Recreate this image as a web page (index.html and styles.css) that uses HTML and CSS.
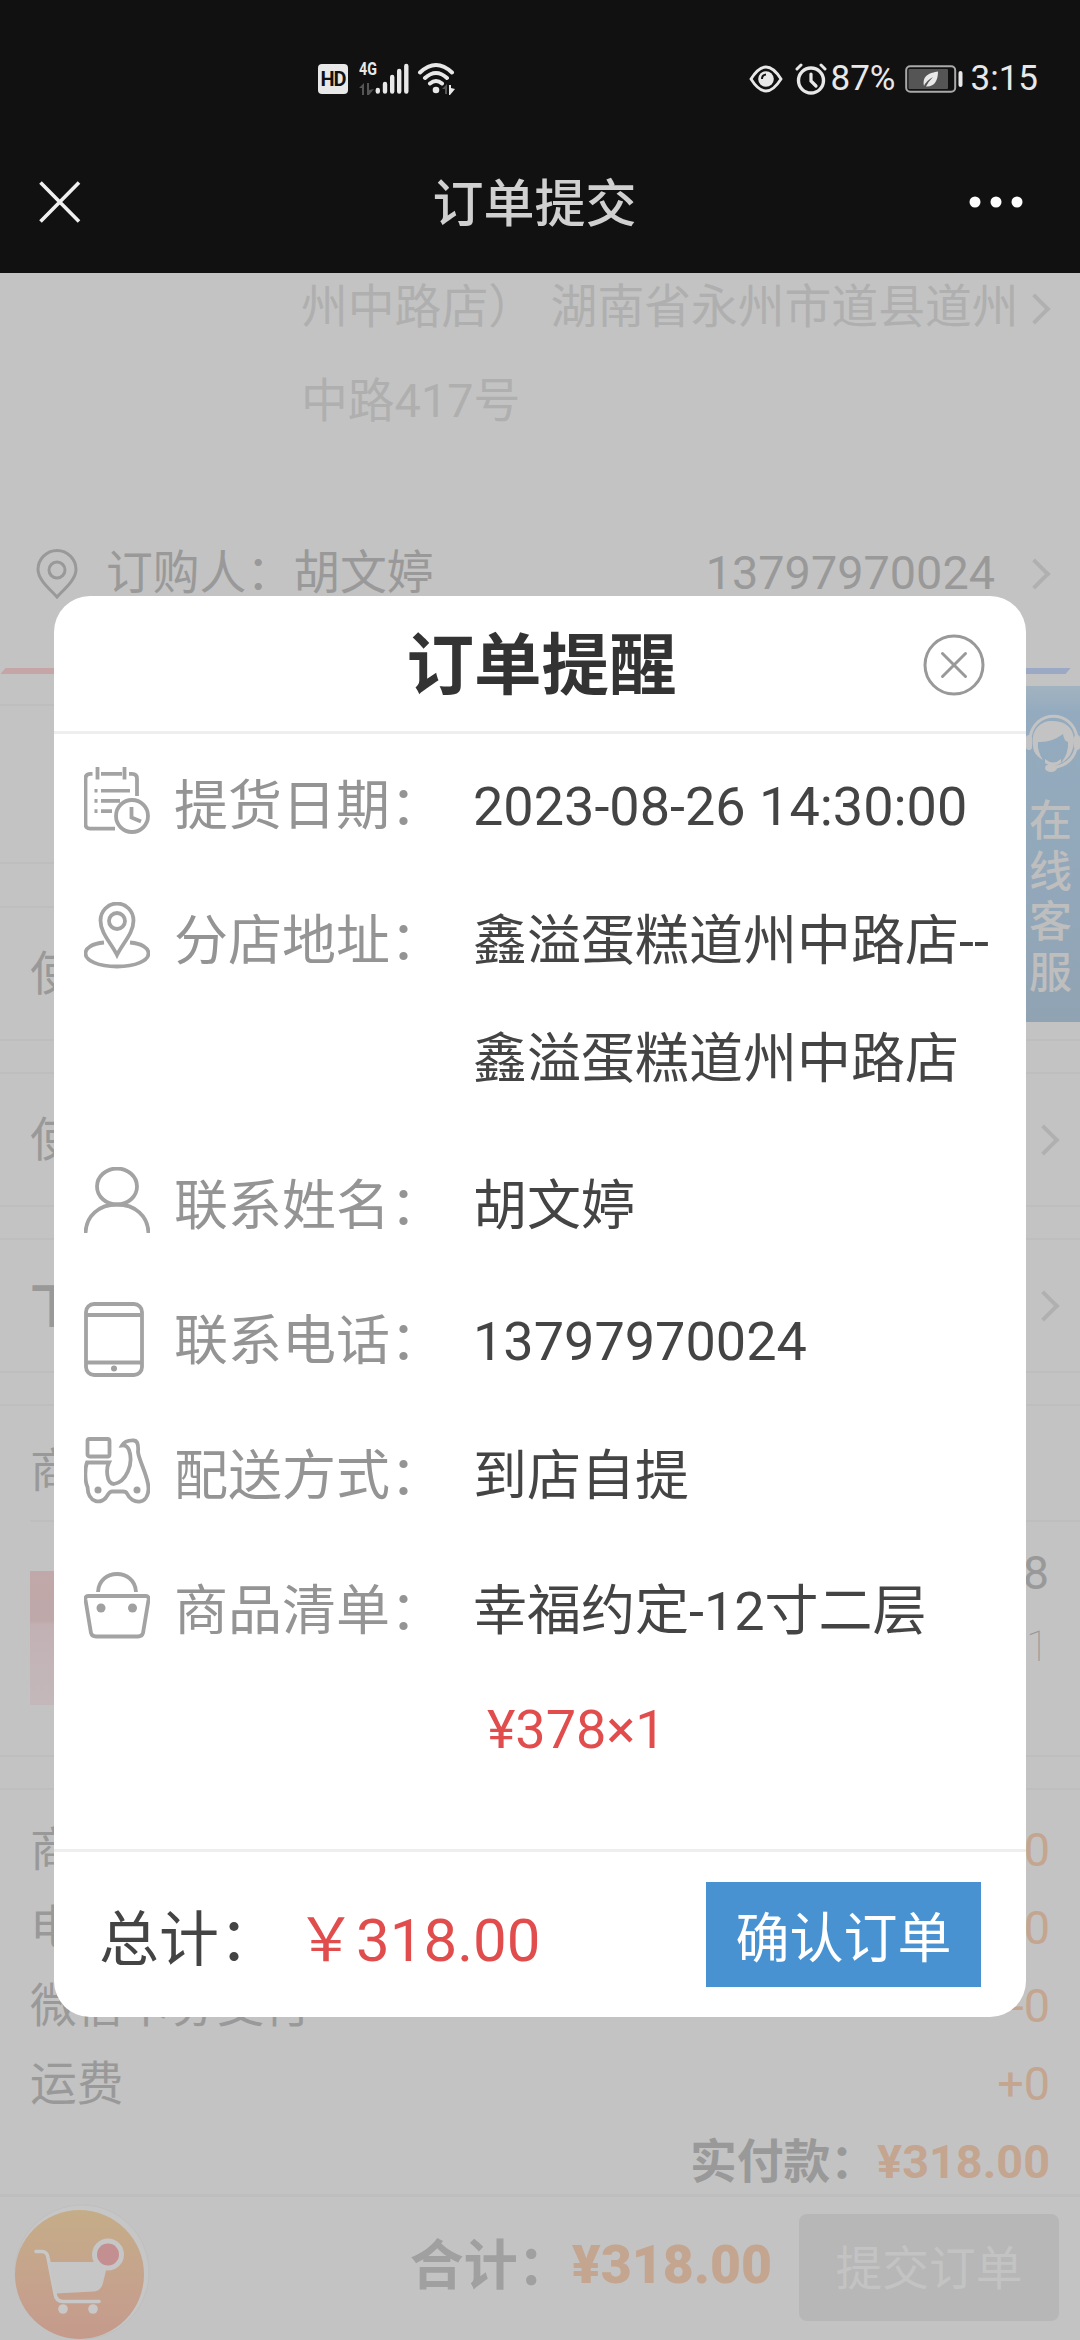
FILE: index.html
```html
<!DOCTYPE html>
<html lang="zh-CN">
<head>
    <meta charset="UTF-8">
    <meta name="viewport" content="width=device-width, initial-scale=1.0">
    <title>订单提交</title>
    <link rel="stylesheet" href="styles.css">
</head>
<body>
    <header class="topbar">
        <div class="status">
            <div class="status-left">
                <span class="hd">HD</span>
                <div class="signal">
                    <span class="net">4G</span>
                    <svg class="signal-bars" width="52" height="34" viewBox="0 0 52 34">
                        <path d="M0 26l5-5v12H3v-7zM8 21h2v7l5-1-5 6H8z" fill="#555"/>
                        <g stroke="#e8e8e8" stroke-width="4.4" stroke-linecap="round">
                            <path d="M18.8 28v1.500M26 22v7.500M33.200 15v14.500M40.200 9v20.500M47.300 4v25.500"/>
                        </g>
                    </svg>
                </div>
                <svg class="wifi" width="40" height="34" viewBox="0 0 40 34">
                    <g fill="none" stroke="#e8e8e8" stroke-width="4" stroke-linecap="round">
                        <path d="M3 10.500Q19 -4.500 35 10.500M8 16Q19 6 30 16M13 21.500Q19 16.500 25 21.500"/>
                    </g>
                    <circle cx="19" cy="28" r="3.300" fill="#e8e8e8"/>
                    <path d="M25 27l5-5v10h-2v-5z" fill="#555"/>
                    <path d="M32 23h2v3l4 1-5 6h-1z" fill="#e8e8e8"/>
                </svg>
            </div>
            <div class="status-right">
                <svg class="eye" width="34" height="28" viewBox="0 0 34 28">
                    <path d="M2 14Q17-10 32 14Q17 38 2 14Z" fill="none" stroke="#e8e8e8" stroke-width="2.800"/>
                    <circle cx="17" cy="14" r="7.800" fill="#e8e8e8"/>
                    <path d="M13 14q0-4 4-4.500" fill="none" stroke="#111" stroke-width="2"/>
                </svg>
                <svg class="alarm" width="32" height="32" viewBox="0 0 32 32">
                    <g fill="none" stroke="#e8e8e8" stroke-linecap="round">
                        <circle cx="16" cy="17.500" r="12.500" stroke-width="3.400"/>
                        <path d="M16 11v7l5 5" stroke-width="3.200"/>
                        <path d="M2 6l4-4M30 6l-4-4" stroke-width="3"/>
                    </g>
                </svg>
                <span class="percent">87%</span>
                <svg class="battery" width="60" height="28" viewBox="0 0 60 28">
                    <rect x="1.200" y="1.200" width="49" height="25.500" rx="4" fill="none" stroke="#aaa" stroke-width="2"/>
                    <rect x="3.500" y="4" width="39.500" height="20" rx="1" fill="#555"/>
                    <path d="M19 21C17 10 25 8 33 6.500C33 15 30 22 21 21.500Q23 17 28 12Q21 16 19 21Z" fill="#e8e8e8"/>
                    <rect x="53.500" y="6" width="4" height="16" rx="2" fill="#e8e8e8"/>
                </svg>
                <span class="time">3:15</span>
            </div>
        </div>
        <div class="nav">
            <svg class="nav-close" width="42" height="42" viewBox="0 0 42 42">
                <path d="M1.500 1.500L40 40.500M40 1.500L1.500 40.500" stroke="#f0f0f0" stroke-width="3.600"/>
            </svg>
            <h1>订单提交</h1>
            <svg class="nav-more" width="54" height="12" viewBox="0 0 54 12" fill="#fff">
                <circle cx="6" cy="6" r="5.500"/><circle cx="27" cy="6" r="5.500"/><circle cx="48" cy="6" r="5.500"/>
            </svg>
        </div>
    </header>

    <main class="page">
        <div class="address">
            <p>州中路店） 湖南省永州市道县道州<br>中路417号</p>
            <i class="arrow"></i>
        </div>
        <div class="buyer">
            <svg class="pin" width="42" height="50" viewBox="0 0 42 50" fill="none" stroke="#999" stroke-width="3">
                <path d="M21 48C15 41 2 31 2 20.500a19 19 0 0 1 38 0C40 31 27 41 21 48Z"/>
                <circle cx="21" cy="21" r="8"/>
            </svg>
            <span>订购人：胡文婷</span>
            <span class="phone">13797970024</span>
            <i class="arrow"></i>
        </div>
        <div class="stripe"><span class="stripe-red"></span><span class="stripe-blue"></span></div>

        <section class="box box-store"></section>
        <section class="box box-line box-first">使用</section>
        <section class="box box-line">使用<i class="arrow"></i></section>
        <section class="box box-line strong">下单<i class="arrow"></i></section>
        <section class="box box-goods">
            <h2>商品</h2>
            <div class="goods">
                <div class="thumb"></div>
                <div class="goods-price">
                    <span>¥378</span>
                    <span class="count">×1</span>
                </div>
            </div>
        </section>
        <section class="box box-fee">
            <div class="fee"><span>商品</span><b>+0</b></div>
            <div class="fee"><span>电子券</span><b>-0</b></div>
            <div class="fee"><span>微信卡券支付</span><b>-0</b></div>
            <div class="fee"><span>运费</span><b>+0</b></div>
            <div class="fee fee-total"><span>实付款：</span><b>¥318.00</b></div>
        </section>
    </main>

    <footer class="bottom">
        <svg class="cart" width="150" height="143" viewBox="0 0 150 143">
            <defs>
                <linearGradient id="cartBg" x1="0" y1="0" x2="0" y2="1">
                    <stop offset="0" stop-color="#c5ad88"/>
                    <stop offset="0.5" stop-color="#c5a48c"/>
                    <stop offset="1" stop-color="#c59a8c"/>
                </linearGradient>
            </defs>
            <circle cx="82" cy="75" r="67" fill="#c6c6c6" stroke="#bfbfbf" stroke-width="1"/>
            <circle cx="79.500" cy="77.500" r="64.500" fill="url(#cartBg)"/>
            <path d="M36 54.500h6q5 0 6 6l7 36q1 8 8 8h36" fill="none" stroke="#c8c8c8" stroke-width="3.600" stroke-linecap="round"/>
            <path d="M48 65h60l-5 21q-2 8-9 8.500l-38 2z" fill="#c6c6c6"/>
            <circle cx="63" cy="112" r="4.800" fill="#c8c8c8"/>
            <circle cx="93" cy="112" r="4.800" fill="#c8c8c8"/>
            <circle cx="108" cy="57.500" r="16" fill="#c6c6c6"/>
            <circle cx="108" cy="57.500" r="11" fill="#c48f90"/>
        </svg>
        <span class="sum-label">合计：</span>
        <b class="sum">¥318.00</b>
        <button class="submit">提交订单</button>
    </footer>

    <aside class="service">
        <svg width="54" height="62" viewBox="0 0 54 62">
            <path d="M4 25C8-4 47-4 51 25" fill="none" stroke="#c3c3c3" stroke-width="3"/>
            <path d="M8 38C2 14 18 7 27 8c18 0 25 15 19 30q-3 8-11 12 8-10 7-21-4-1-5-8-12 9-25 8-1 9 5 18-6-3-9-9Z" fill="#c3c3c3"/>
            <path d="M19 46q8 7 16 0v4q-8 5-16 0z" fill="#c3c3c3"/>
            <rect x="0" y="22" width="6" height="15" rx="3" fill="#c3c3c3"/>
            <rect x="48" y="22" width="6" height="15" rx="3" fill="#c3c3c3"/>
            <path d="M50 36q-5 17-24 18.500" fill="none" stroke="#c3c3c3" stroke-width="3"/>
            <ellipse cx="25" cy="55" rx="6" ry="4" fill="#c3c3c3"/>
        </svg>
        <span>在</span><span>线</span><span>客</span><span>服</span>
    </aside>

    <div class="modal">
        <div class="modal-head">
            <h2>订单提醒</h2>
            <svg class="modal-close" width="62" height="62" viewBox="0 0 62 62" fill="none" stroke="#999">
                <circle cx="31" cy="31" r="29" stroke-width="3"/>
                <path d="M19.500 19.500l23 23M42.500 19.500l-23 23" stroke-width="3" stroke-linecap="round"/>
            </svg>
        </div>
        <div class="modal-list">
            <div class="row">
                <svg class="row-icon" width="66" height="76" viewBox="0 0 66 76">
                    <path d="M31 63.500H6q-4.500 0-4.500-4.500V12q0-5 5-5h2M17 7h21M45 7h3q5 0 5 5v18M13.500 0v13M40.500 0v13M17 24.500h29M17 35h19M17 45.500h11M10.500 24.500h3M10.500 35h3M10.500 45.500h3" transform="scale(1 .97)"/>
                    <circle cx="48" cy="49" r="16"/>
                    <path d="M47.500 40v10.500l9.500 4"/>
                </svg>
                <span class="label">提货日期：</span>
                <span class="value">2023-08-26 14:30:00</span>
            </div>
            <div class="row row-wide">
                <svg class="row-icon" width="66" height="76" viewBox="0 0 66 76">
                    <path d="M33 53C27 41 16.500 31 16.500 18.500a16.500 17 0 0 1 33 0C49.500 31 39 41 33 53Z"/>
                    <circle cx="33" cy="19" r="8"/>
                    <path d="M20 40.500C8 41.500 1.500 46 1.500 51.500C1.500 58.500 14 64.500 33 64.500S64.500 58.500 64.500 51.500C64.500 46 58 41.500 46 40.500"/>
                </svg>
                <span class="label">分店地址：</span>
                <span class="value">鑫溢蛋糕道州中路店--<br>鑫溢蛋糕道州中路店</span>
            </div>
            <div class="row">
                <svg class="row-icon" width="66" height="76" viewBox="0 0 66 76">
                    <ellipse cx="33" cy="19.500" rx="20" ry="18"/>
                    <path d="M1.500 66C2 49 15 37.500 33 37.500S64 49 64.500 66"/>
                </svg>
                <span class="label">联系姓名：</span>
                <span class="value">胡文婷</span>
            </div>
            <div class="row">
                <svg class="row-icon" width="66" height="76" viewBox="0 0 66 76">
                    <rect x="2" y="2" width="56" height="71" rx="8"/>
                    <path d="M2 13h56M2 60.500h56"/>
                    <circle class="dot" cx="30" cy="66.500" r="3"/>
                </svg>
                <span class="label">联系电话：</span>
                <span class="value">13797970024</span>
            </div>
            <div class="row">
                <svg class="row-icon" width="66" height="76" viewBox="0 0 66 76">
                    <rect x="3.500" y="2" width="22" height="17.500" rx="2"/>
                    <path d="M3 25.500H25C22 31 22 47 30 47C42 45 50 27 45 13Q43 8 38 8.500Q41 3 50 3.500Q55 4 54 15C55 24 65 41 64.500 52C64 68 48 68 43 56.500Q42 54.500 39 54.500H28Q26 54.500 24 57.500C18 69 4 66 3.500 50C1 45 .5 32 3 25.500Z"/>
                    <circle class="dot" cx="14" cy="53" r="3.500"/>
                    <circle class="dot" cx="53" cy="53" r="3.500"/>
                </svg>
                <span class="label">配送方式：</span>
                <span class="value">到店自提</span>
            </div>
            <div class="row">
                <svg class="row-icon" width="66" height="76" viewBox="0 0 66 76">
                    <path d="M14 20C15-4 51-4 52 20"/>
                    <path d="M4 24H62Q65 24 64.500 28L59 61Q58 64.500 54 64.500H12Q8 64.500 7 61L1.500 28Q1 24 4 24Z"/>
                    <circle class="dot" cx="17" cy="36" r="4.500"/>
                    <circle class="dot" cx="48.500" cy="36" r="4.500"/>
                </svg>
                <span class="label">商品清单：</span>
                <span class="value">幸福约定-12寸二层<br><em>¥378×1</em></span>
            </div>
        </div>
        <div class="modal-foot">
            <span class="total-label">总计：</span>
            <span class="total">￥318.00</span>
            <button class="confirm">确认订单</button>
        </div>
    </div>
</body>
</html>
```
FILE: styles.css
```css
* {
    box-sizing: border-box;
}
body {
    position: relative;
    margin: 0;
    width: 1080px;
    height: 2340px;
    overflow: hidden;
    display: flex;
    flex-direction: column;
    background: #c3c3c3;
    color: #999;
    font-family: Roboto, "Noto Sans CJK SC", sans-serif;
    font-size: 46.8px;
}
h1, h2, p {
    margin: 0;
}
svg {
    display: block;
    flex: none;
}
button {
    border: 0;
    padding: 0;
    font-family: inherit;
}

/* status bar and title */
.topbar {
    height: 273px;
    flex: none;
    background: #111;
    color: #e8e8e8;
}
.status {
    height: 130px;
    padding: 28px 42px 0 318px;
    display: flex;
    justify-content: space-between;
    align-items: center;
}
.status-left, .status-right {
    display: flex;
    align-items: center;
}
.hd {
    width: 30px;
    height: 30px;
    border-radius: 4px;
    background: #e8e8e8;
    color: #111;
    font-size: 20px;
    font-weight: 700;
    line-height: 31px;
    text-align: center;
    letter-spacing: -1px;
}
.signal {
    position: relative;
    margin-left: 11px;
}
.net {
    position: absolute;
    left: 0;
    top: -2px;
    font-size: 19px;
    font-weight: 700;
    line-height: 18px;
    transform: scaleX(0.75);
    transform-origin: left;
}
.wifi {
    margin-left: 6px;
}
.alarm {
    margin-left: 12px;
}
.percent, .time {
    font-size: 35px;
    line-height: 40px;
}
.percent {
    margin-left: 4px;
}
.battery {
    margin: 0 6px 0 9px;
}
.nav {
    height: 143px;
    padding: 0 57px 0 39px;
    display: flex;
    align-items: center;
    justify-content: space-between;
}
.nav h1 {
    margin-left: 19px;
    color: #d0d0d0;
    font-size: 51px;
    font-weight: 500;
    line-height: 70px;
    padding-top: 7px;
}

/* dimmed order page */
.page {
    flex: 1;
    overflow: hidden;
}
.arrow {
    width: 22px;
    height: 22px;
    border-top: 4px solid #b0b0b0;
    border-right: 4px solid #b0b0b0;
    transform: rotate(45deg);
}
.address {
    margin-top: -13px;
    padding: 0 34px 0 301px;
    display: flex;
    justify-content: space-between;
    color: #afafaf;
    line-height: 94px;
    white-space: nowrap;
    word-spacing: 4px;
}
.address .arrow {
    margin-top: 38px;
    margin-left: -20px;
}
.buyer {
    height: 94px;
    margin-top: 79px;
    padding: 0 34px 0 36px;
    display: flex;
    align-items: center;
}
.buyer span {
    margin-left: 28px;
    line-height: 94px;
    margin-top: -3px;
}
.buyer .phone {
    margin-left: auto;
    margin-right: 29px;
}
.buyer .arrow {
    margin-left: 0;
}
.stripe {
    height: 6px;
    margin: 47px 12px 0 3px;
    display: flex;
    justify-content: space-between;
}
.stripe span {
    width: 100px;
    transform: skewX(-40deg);
}
.stripe-red {
    background: #c5a5a5;
}
.stripe-blue {
    background: #9ca9c5;
}
.box {
    border-top: 2px solid #bebebe;
    border-bottom: 2px solid #bebebe;
}
.box-store {
    height: 160px;
    margin-top: 30px;
}
.box-line {
    height: 135px;
    margin-top: 31px;
    padding: 0 25px 0 30px;
    display: flex;
    justify-content: space-between;
    align-items: center;
    line-height: 126px;
}
.box-first {
    margin-top: 42px;
}
.strong {
    font-weight: 700;
}
.box-goods {
    height: 353px;
    margin-top: 31px;
    padding-left: 30px;
}
.box-goods h2 {
    height: 116px;
    padding-top: 20px;
    border-bottom: 2px solid #bebebe;
    font-size: 46.8px;
    font-weight: 400;
    line-height: 90px;
}
.goods {
    padding: 49px 31px 0 0;
    display: flex;
    justify-content: space-between;
}
.thumb {
    width: 134px;
    height: 134px;
    background: linear-gradient(#c1a8aa 0, #bfa8a9 50px, #c2b1b4 54px, #c3b8bb 100%);
}
.goods-price {
    margin-top: -34px;
    display: flex;
    flex-direction: column;
    text-align: right;
    line-height: 73px;
}
.count {
    font-size: 42px;
    font-weight: 100;
}
.box-fee {
    height: 405px;
    margin-top: 31px;
    padding: 21px 30px 0;
    border-bottom: 0;
}
.fee {
    height: 78px;
    display: flex;
    justify-content: space-between;
    line-height: 78px;
}
.fee b {
    color: #c4a58f;
    font-weight: 400;
}
.fee-total {
    justify-content: flex-end;
    font-weight: 700;
}
.fee-total b {
    font-weight: 700;
}
.bottom {
    height: 146px;
    flex: none;
    padding: 0 21px 0 0;
    border-top: 3px solid #bebebe;
    display: flex;
    align-items: center;
    color: #a0a0a0;
    font-size: 54px;
    font-weight: 700;
}
.sum-label {
    margin-left: auto;
    margin-top: -14px;
}
.sum {
    margin: -9px 27px 0 0;
    color: #c4a58f;
    font-size: 53.500px;
}
.submit {
    width: 260px;
    height: 107px;
    padding-bottom: 7px;
    border-radius: 8px;
    margin-bottom: 2px;
    background: #b7b7b7;
    color: #c3c3c3;
    font-size: 46.8px;
}

/* online service tab on the right edge */
.service {
    position: absolute;
    right: 0;
    top: 686px;
    width: 56px;
    height: 336px;
    padding: 27px 0 0 2px;
    display: flex;
    flex-direction: column;
    background: linear-gradient(#a2b3c0 0, #94abbf 26px, #92a8ba 60%, #90a3b3 100%);
    color: #bebebe;
}
.service svg {
    margin-bottom: 21px;
}
.service span {
    font-size: 43px;
    font-weight: 500;
    line-height: 50.500px;
    padding-left: 3px;
}

/* order reminder */
.modal {
    position: absolute;
    left: 54px;
    top: 596px;
    width: 972px;
    height: 1421px;
    border-radius: 36px;
    overflow: hidden;
    display: flex;
    flex-direction: column;
    background: #fff;
    color: #444;
    font-size: 54px;
}
.modal-head {
    position: relative;
    height: 138px;
    border-bottom: 3px solid #eee;
    text-align: center;
}
.modal-head h2 {
    color: #333;
    font-size: 67.5px;
    line-height: 140px;
    padding-left: 3px;
}
.modal-close {
    position: absolute;
    right: 41px;
    top: 38px;
}
.modal-list {
    flex: 1;
    padding: 5px 0 0 30px;
}
.row {
    padding: 9px 0 8px;
    display: grid;
    grid-template-columns: 66px 270px 1fr;
    line-height: 118px;
    white-space: nowrap;
}
.row-wide {
    margin-bottom: 12px;
}
.row-icon {
    margin-top: 19px;
    fill: none;
    stroke: #a3a3a3;
    stroke-width: 3.8;
}
.row-icon .dot {
    fill: #a0a0a0;
    stroke: none;
}
.label {
    padding-left: 24px;
    color: #949494;
}
.value {
    padding-left: 53px;
}
.value em {
    padding-left: 14px;
    color: #e14d4d;
    font-style: normal;
}
.modal-foot {
    height: 168px;
    padding: 0 45px;
    border-top: 3px solid #eee;
    display: flex;
    align-items: center;
    font-size: 60px;
}
.total {
    margin-left: 17px;
    color: #e14d4d;
}
.confirm {
    margin-left: auto;
    width: 275px;
    height: 105px;
    background: #4892d1;
    color: #fff;
    font-size: 54px;
    line-height: 115px;
}
```
